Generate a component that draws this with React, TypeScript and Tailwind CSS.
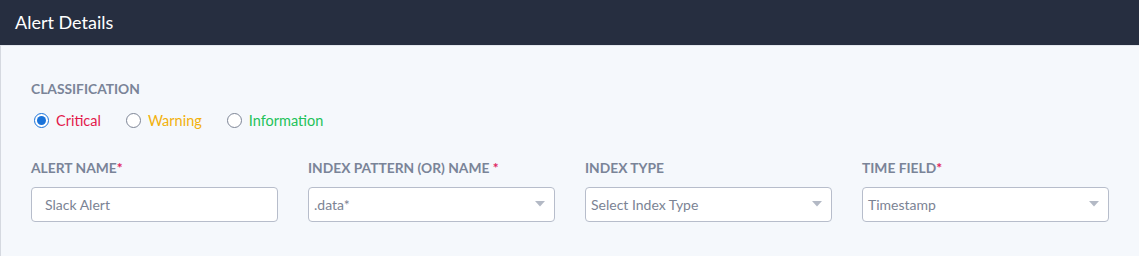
const font = { fontFamily: "Lato, 'Noto Sans', sans-serif" };

function Radio({ label, color, checked }: { label: string; color: string; checked?: boolean }) {
  return (
    <label className="flex items-center gap-[7px]">
      <span
        className={`flex h-[15px] w-[15px] items-center justify-center rounded-full border ${
          checked ? "border-[#1a73d9]" : "border-[#7d8596]"
        } bg-white`}
      >
        {checked && <span className="h-[9px] w-[9px] rounded-full bg-[#1a73d9]" />}
      </span>
      <span className={`text-[14.5px] ${color}`}>{label}</span>
    </label>
  );
}

function Caret() {
  return (
    <svg width="10" height="6" viewBox="0 0 10 6" className="mr-[9px]">
      <path d="M0 0h10L5 5.5z" fill="#b3b9c5" />
    </svg>
  );
}

function Field({
  label,
  required,
  value,
  select,
}: {
  label: string;
  required?: "tight" | "space";
  value: string;
  select?: boolean;
}) {
  return (
    <div className="flex flex-col">
      <div className="text-[13.8px] font-bold uppercase leading-[17px] text-[#7a8498]">
        {label}
        {required === "space" && " "}
        {required && <span className="text-[#e0245e]">*</span>}
      </div>
      <div
        className={`mt-[11px] flex h-[35px] items-center justify-between rounded-[4px] border border-[#b7bdcb] bg-white ${
          select ? "pl-[5px]" : "pl-[13px]"
        }`}
      >
        <span className="text-[14px] text-[#7b8394]">{value}</span>
        {select && <Caret />}
      </div>
    </div>
  );
}

export default function App() {
  return (
    <div className="h-[256px] w-[1139px] bg-[#f5f8fc]" style={font}>
      <div className="flex h-[45px] items-center bg-[#262e40] px-[15px]">
        <span className="text-[18px] text-white">Alert Details</span>
      </div>
      <div className="h-[211px] border-l border-t border-l-[#d5d9e0] border-t-[#e3e7ee] px-[30px] pt-[34px]">
        <div className="text-[13.8px] font-bold uppercase leading-[17px] text-[#7a8498]">Classification</div>
        <div className="mt-[13px] flex items-center gap-[25px] pl-[3px]">
          <Radio label="Critical" color="text-[#e3184b]" checked />
          <Radio label="Warning" color="text-[#f2b10c]" />
          <Radio label="Information" color="text-[#1ec25a]" />
        </div>
        <div className="mt-[27px] grid grid-cols-4 gap-[30px]">
          <Field label="Alert Name" required="tight" value="Slack Alert" />
          <Field label="Index Pattern (or) Name" required="space" value=".data*" select />
          <Field label="Index Type" value="Select Index Type" select />
          <Field label="Time Field" required="tight" value="Timestamp" select />
        </div>
      </div>
    </div>
  );
}
